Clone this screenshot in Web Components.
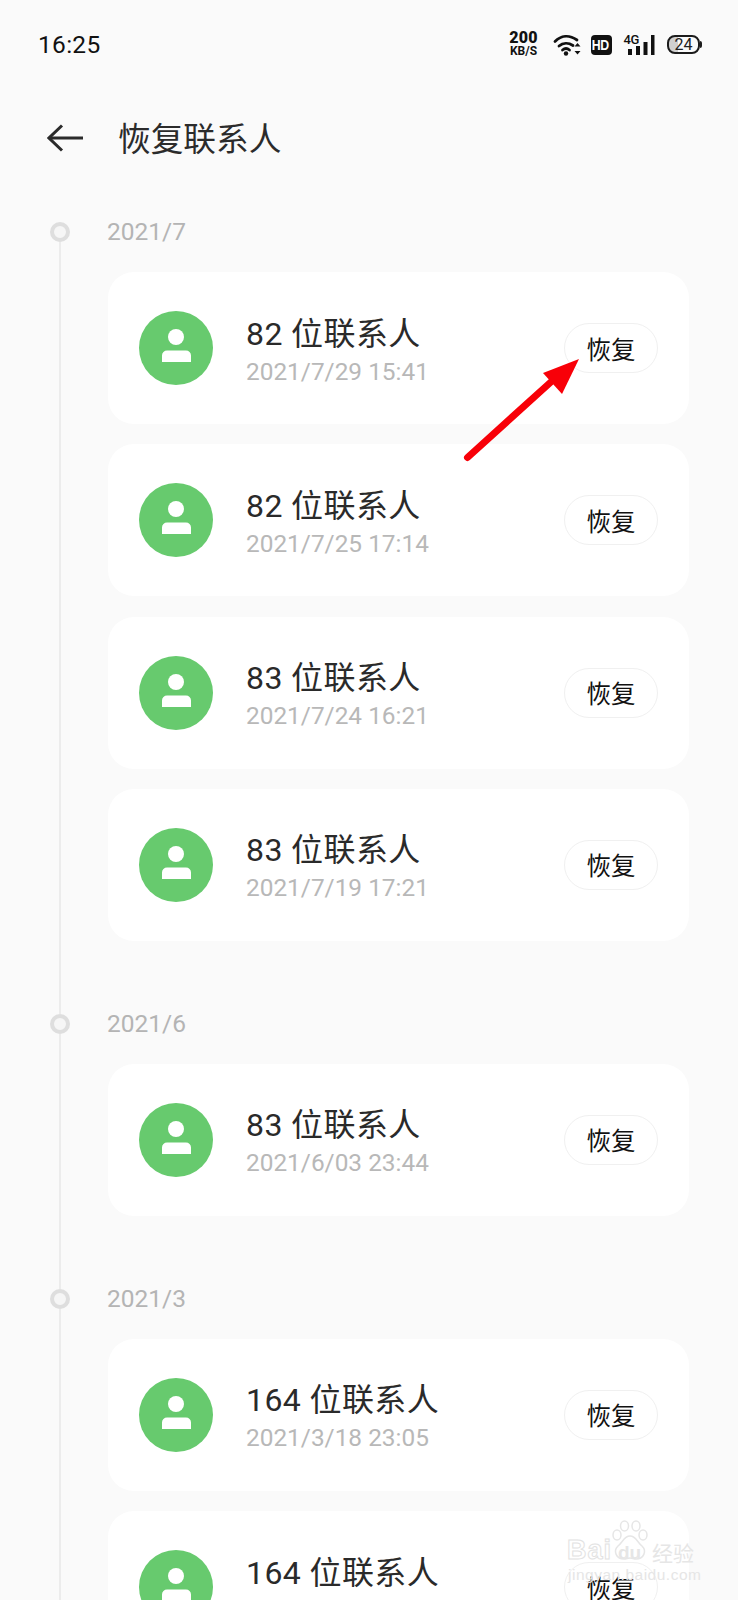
<!DOCTYPE html>
<html lang="zh">
<head>
<meta charset="utf-8">
<title>恢复联系人</title>
<style>
  html, body {
    margin: 0;
    height: 1600px;
    overflow: hidden;
    background: #fafafa;
    font-family: Roboto, "Noto Sans CJK SC", sans-serif;
  }
  main { display: block; padding-top: 27px; }
</style>
</head>
<body>
<status-bar></status-bar>
<app-header>恢复联系人</app-header>
<main>
  <timeline-group label="2021/7" first>
    <backup-card time="2021/7/29 15:41">82 位联系人</backup-card>
    <backup-card time="2021/7/25 17:14">82 位联系人</backup-card>
    <backup-card time="2021/7/24 16:21">83 位联系人</backup-card>
    <backup-card time="2021/7/19 17:21">83 位联系人</backup-card>
  </timeline-group>
  <timeline-group label="2021/6">
    <backup-card time="2021/6/03 23:44">83 位联系人</backup-card>
  </timeline-group>
  <timeline-group label="2021/3">
    <backup-card time="2021/3/18 23:05">164 位联系人</backup-card>
    <backup-card>164 位联系人</backup-card>
  </timeline-group>
</main>
<red-arrow></red-arrow>
<baidu-mark></baidu-mark>

<script>
class StatusBar extends HTMLElement {
  constructor() {
    super();
    this.attachShadow({ mode: 'open' });
    this.shadowRoot.innerHTML = `
      <style>
        :host {
          display: flex;
          align-items: center;
          height: 89px;
          padding: 0 35.5px 1px 38px;
          color: #111;
        }
        #time { font-size: 24.5px; letter-spacing: 0.3px; flex: 1; }
        #icons { display: flex; align-items: center; }
        #speed {
          display: flex;
          flex-direction: column;
          align-items: center;
          width: 28px;
          margin-right: 15px;
          font-weight: 700;
          white-space: nowrap;
        }
        #speed b { font-size: 16px; line-height: 13px; letter-spacing: 0.2px; }
        #speed span { font-size: 12px; line-height: 13px; margin-top: 1px; }
        svg { display: block; }
        #hd {
          width: 21px;
          height: 20px;
          margin: 0 12px 0 9px;
          background: #111;
          color: #fff;
          border-radius: 4px;
          font: 700 15px/20px "Liberation Sans", sans-serif;
          text-align: center;
          overflow: hidden;
        }
        #hd span { display: inline-block; transform: scaleX(0.82); margin-left: -2px; letter-spacing: -0.5px; }
        #net { position: relative; width: 31px; height: 24px; margin-right: 12.5px; }
        #net span {
          position: absolute;
          left: 0;
          top: 1px;
          font: 500 13px/12px Roboto, sans-serif;
          letter-spacing: -0.5px;
        }
        #batt {
          box-sizing: border-box;
          position: relative;
          width: 33px;
          height: 19px;
          margin-right: 2.5px;
          border: 2px solid #1c1c1c;
          border-radius: 8px;
          background: linear-gradient(90deg, #d0d0d0 0 30%, #fafafa 30%);
          font-size: 16px;
          line-height: 15px;
          text-align: center;
          color: #222;
        }
        #batt::after {
          content: "";
          position: absolute;
          right: -4px;
          top: 4px;
          width: 2px;
          height: 7px;
          background: #1c1c1c;
          border-radius: 0 2px 2px 0;
        }
      </style>
      <div id="time">16:25</div>
      <div id="icons">
        <div id="speed"><b>200</b><span>KB/S</span></div>
        <svg width="29" height="24" viewBox="0 0 29 24" fill="none" stroke="#111" stroke-width="2.800" stroke-linecap="round">
          <path d="M2 8.500C8 2.500 16 1.500 24 7"/>
          <path d="M6 13C10 9.500 15.500 9.500 20 12.500"/>
          <path d="M9.500 17c2.200-1.800 4.800-1.800 7 0"/>
          <circle cx="13" cy="20.500" r="2.200" fill="#111" stroke="none"/>
          <path d="M24.500 10l-3 3.500h6zM24.500 21.500l-3-3.500h6z" fill="#111" stroke="none"/>
        </svg>
        <div id="hd"><span>HD</span></div>
        <div id="net">
          <span>4G</span>
          <svg width="31" height="24" viewBox="0 0 31 24" fill="#111">
            <rect x="4" y="16" width="4" height="6"/>
            <rect x="12" y="13" width="4" height="9"/>
            <rect x="19.500" y="9" width="4" height="13"/>
            <rect x="27" y="2" width="3.500" height="20"/>
          </svg>
        </div>
        <div id="batt">24</div>
      </div>
    `;
  }
}

class AppHeader extends HTMLElement {
  constructor() {
    super();
    this.attachShadow({ mode: 'open' });
    this.shadowRoot.innerHTML = `
      <style>
        :host {
          display: flex;
          align-items: center;
          height: 95px;
          padding-left: 47px;
          color: #2b2b2b;
        }
        svg { display: block; margin-right: 35px; }
        #title { padding-top: 4px; font-size: 32.7px; line-height: 40px; }
      </style>
      <svg width="36" height="28" viewBox="0 0 36 28" fill="none" stroke="#2b2b2b" stroke-width="3">
        <path d="M36 14H2"/>
        <path d="M15 1.500L2 14l13 12.500"/>
      </svg>
      <div id="title"><slot></slot></div>
    `;
  }
}

class TimelineGroup extends HTMLElement {
  constructor() {
    super();
    this.attachShadow({ mode: 'open' });
    this.shadowRoot.innerHTML = `
      <style>
        :host {
          display: grid;
          grid-template-columns: 108px 581px;
        }
        #rail {
          display: flex;
          flex-direction: column;
          align-items: center;
          width: 20px;
          margin-left: 50px;
        }
        #dot {
          box-sizing: border-box;
          flex: none;
          width: 20px;
          height: 20px;
          border: 4px solid #dedede;
          border-radius: 50%;
          background: #f6f6f6;
        }
        #line-top { flex: none; height: 10px; width: 2px; background: #ececec; }
        :host([first]) #line-top { visibility: hidden; }
        #line { flex: 1; width: 2px; background: #ececec; }
        #label {
          margin-left: -1px;
          font-size: 24.5px;
          line-height: 40px;
          color: #b4b4b4;
          margin-bottom: 20px;
        }
        #cards {
          display: flex;
          flex-direction: column;
          gap: 20.3px;
          padding-bottom: 63px;
        }
      </style>
      <div id="rail"><div id="line-top"></div><div id="dot"></div><div id="line"></div></div>
      <div>
        <div id="label"></div>
        <div id="cards"><slot></slot></div>
      </div>
    `;
  }

  connectedCallback() {
    this.shadowRoot.querySelector('#label').textContent = this.getAttribute('label');
  }
}

class BackupCard extends HTMLElement {
  constructor() {
    super();
    this.attachShadow({ mode: 'open' });
    this.shadowRoot.innerHTML = `
      <style>
        :host {
          box-sizing: border-box;
          display: flex;
          align-items: center;
          height: 152px;
          padding: 0 31px 0 30.5px;
          background: #fff;
          border-radius: 26px;
        }
        svg { display: block; flex: none; margin-right: 33.5px; }
        #text { flex: 1; padding-top: 5px; }
        #name { font-size: 32px; line-height: 40px; color: #2a2a2a; letter-spacing: 0.4px; }
        #time { min-height: 32px; margin-top: 2px; font-size: 24.4px; line-height: 32px; color: #b8b8b8; }
      </style>
      <svg width="74" height="74" viewBox="0 0 74 74">
        <circle cx="37" cy="37" r="37" fill="#67ca6e"/>
        <circle cx="37" cy="26" r="8" fill="#fff"/>
        <path d="M23 44.500a5 5 0 0 1 5-5h19a5 5 0 0 1 5 5V51H23z" fill="#fff"/>
      </svg>
      <div id="text">
        <div id="name"><slot></slot></div>
        <div id="time"></div>
      </div>
      <restore-button>恢复</restore-button>
    `;
  }

  connectedCallback() {
    this.shadowRoot.querySelector('#time').textContent = this.getAttribute('time') || '';
  }
}

class RestoreButton extends HTMLElement {
  constructor() {
    super();
    this.attachShadow({ mode: 'open' });
    this.shadowRoot.innerHTML = `
      <style>
        :host {
          box-sizing: border-box;
          display: flex;
          align-items: center;
          justify-content: center;
          flex: none;
          width: 94px;
          height: 50px;
          border: 1.5px solid #f0f0f0;
          border-radius: 25px;
          background: #fff;
          color: #111;
          font-size: 24.5px;
        }
      </style>
      <slot></slot>
    `;
  }
}

// annotation drawn over the screenshot
class RedArrow extends HTMLElement {
  constructor() {
    super();
    this.attachShadow({ mode: 'open' });
    this.shadowRoot.innerHTML = `
      <style>
        :host { position: absolute; left: 460px; top: 352px; width: 125px; height: 112px; }
        svg { display: block; }
      </style>
      <svg width="125" height="112" viewBox="0 0 125 112">
        <path d="M7.500 105.500L92 29" stroke="#f80008" stroke-width="7" stroke-linecap="round"/>
        <path d="M119 7L83 21l19 21z" fill="#f80008"/>
      </svg>
    `;
  }
}

class BaiduMark extends HTMLElement {
  constructor() {
    super();
    this.attachShadow({ mode: 'open' });
    this.shadowRoot.innerHTML = `
      <style>
        :host {
          position: absolute;
          left: 560px;
          top: 1518px;
          width: 172px;
          height: 70px;
          color: #e6e6e6;
        }
        div { position: absolute; white-space: nowrap; }
        svg { position: absolute; left: 52px; top: 2px; }
        #bai {
          left: 7px;
          top: 17px;
          font: 700 27px/30px "Liberation Sans", sans-serif;
          letter-spacing: 1px;
          color: transparent;
          -webkit-text-stroke: 1px #e2e2e2;
        }
        #du { left: 58px; top: 23px; font: 700 19px/24px "Liberation Sans", sans-serif; }
        #jy { left: 92px; top: 20px; font: 400 21px/28px "Noto Sans CJK SC", sans-serif; }
        #url {
          left: 8px;
          top: 48px;
          font: 400 15.5px/18px "Liberation Sans", sans-serif;
          letter-spacing: 0.5px;
        }
      </style>
      <svg width="36" height="43" viewBox="0 0 36 43" fill="none" stroke="#e6e6e6" stroke-width="1.5">
        <ellipse cx="5" cy="15" rx="4" ry="5"/>
        <ellipse cx="12.500" cy="6" rx="4" ry="5"/>
        <ellipse cx="24" cy="6" rx="4" ry="5"/>
        <ellipse cx="31" cy="15" rx="4" ry="5"/>
        <path d="M18 16c-6 0-7 6-12 10-5 5-2 13 6 13 2 0 4-1 6-1s4 1 6 1c8 0 11-8 6-13-5-4-6-10-12-10z"/>
      </svg>
      <div id="bai">Bai</div>
      <div id="du">du</div>
      <div id="jy">经验</div>
      <div id="url">jingyan.baidu.com</div>
    `;
  }
}

customElements.define('status-bar', StatusBar);
customElements.define('app-header', AppHeader);
customElements.define('timeline-group', TimelineGroup);
customElements.define('backup-card', BackupCard);
customElements.define('restore-button', RestoreButton);
customElements.define('red-arrow', RedArrow);
customElements.define('baidu-mark', BaiduMark);
</script>
</body>
</html>
